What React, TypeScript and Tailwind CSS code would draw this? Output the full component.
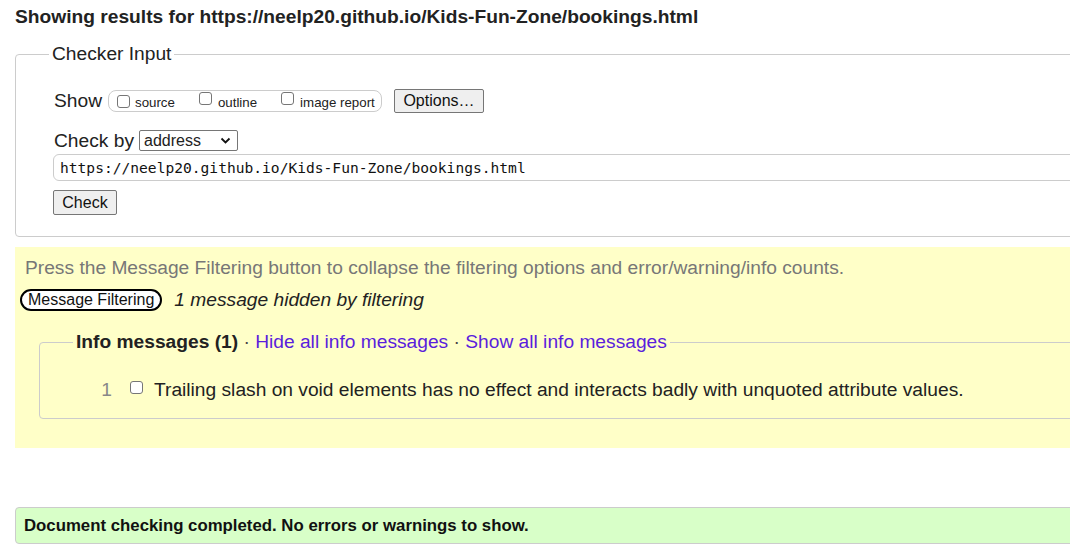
import React from "react";

const Checkbox: React.FC = () => (
  <span className="inline-block w-[13px] h-[13px] border border-[#767676] rounded-[3px] bg-white shrink-0" />
);

const App: React.FC = () => {
  return (
    <div className="w-[1070px] h-[550px] overflow-hidden bg-white text-[#222] font-['Liberation_Sans',Arial,sans-serif]">
      <div className="w-[1100px] pl-[15px]">
        {/* Heading */}
        <h1 className="pt-[6px] text-[19.2px] leading-[22px] font-bold text-[#222]">
          Showing results for https://neelp20.github.io/Kids-Fun-Zone/bookings.html
        </h1>

        {/* Checker Input */}
        <fieldset className="mt-[15px] border border-[#ccc] rounded-[4px]">
          <legend className="ml-[33px] px-[3px] text-[19.2px] leading-[22px] text-[#222]">Checker Input</legend>

          <div className="pl-[38px] pb-[21px]">
            <div className="mt-[24px] flex items-center h-[24px]">
              <span className="text-[19.2px] leading-[22px] mr-[6px]">Show</span>
              <div className="flex items-center h-[22px] w-[274px] border border-[#ccc] rounded-[8px] pl-[8px] text-[13.3px]">
                <Checkbox />
                <span className="ml-[5px] mt-[4px]">source</span>
                <span className="ml-[24px]"><Checkbox /></span>
                <span className="ml-[6px] mt-[4px]">outline</span>
                <span className="ml-[24px]"><Checkbox /></span>
                <span className="ml-[6px] mt-[4px]">image report</span>
              </div>
              <button className="ml-[12px] h-[24px] w-[90px] border border-[#767676] bg-[#efefef] rounded-[2px] text-[16px] leading-[20px] text-[#111]">
                Options…
              </button>
            </div>

            <div className="mt-[17px] flex items-center h-[21px]">
              <span className="text-[19.2px] leading-[22px] mr-[5px]">Check by</span>
              <div className="flex items-center justify-between w-[99px] h-[21px] border border-[#767676] rounded-[2px] pl-[4px] pr-[6px] text-[16px] leading-[19px] bg-white">
                <span>address</span>
                <svg width="11" height="7" viewBox="0 0 11 7" fill="none">
                  <path d="M1.5 1.5L5.5 5.5L9.5 1.5" stroke="#111" strokeWidth="1.8" />
                </svg>
              </div>
            </div>

            <div className="mt-[3px] -ml-[1px] h-[27px] border border-[#ccc] rounded-[6px] flex items-center pl-[6px] font-['DejaVu_Sans_Mono',monospace] text-[14.6px] text-[#111]">
              https://neelp20.github.io/Kids-Fun-Zone/bookings.html
            </div>

            <button className="mt-[9px] -ml-[1px] h-[25px] w-[64px] border border-[#767676] bg-[#efefef] rounded-[2px] text-[16px] leading-[20px] text-[#111] block">
              Check
            </button>
          </div>
        </fieldset>

        {/* Filtering / messages */}
        <div className="mt-[10px] h-[201px] bg-[#ffffc8] pt-[10px]">
          <p className="pl-[10px] text-[19.2px] leading-[22px] text-[#777]">
            Press the Message Filtering button to collapse the filtering options and error/warning/info counts.
          </p>
          <div className="mt-[10px] flex items-center h-[22px] pl-[5px]">
            <button className="h-[22px] px-[6px] border-2 border-black rounded-full bg-white text-[16px] leading-[16px] text-[#111]">
              Message Filtering
            </button>
            <span className="ml-[12px] text-[19.2px] italic leading-[22px] text-[#222]">1 message hidden by filtering</span>
          </div>

          <fieldset className="mt-[20px] ml-[24px] border border-[#ccc] rounded-[4px] pb-[17px]">
            <legend className="ml-[33px] px-[3px] text-[19.2px] leading-[22px]">
              <span className="font-bold text-[#222]">Info messages (1)</span>
              <span className="text-[#444]"> · </span>
              <a className="text-[#5a1edc]">Hide all info messages</a>
              <span className="text-[#444]"> · </span>
              <a className="text-[#5a1edc]">Show all info messages</a>
            </legend>
            <div className="mt-[26px] flex items-center text-[19.2px] leading-[22px]">
              <span className="w-[72px] text-right text-[#888]">1</span>
              <span className="ml-[18px] -mt-[4px]"><Checkbox /></span>
              <span className="ml-[11px] text-[#222]">
                Trailing slash on void elements has no effect and interacts badly with unquoted attribute values.
              </span>
            </div>
          </fieldset>
        </div>

        {/* Success */}
        <div className="mt-[59px] h-[37px] border border-[#ccc] rounded-[4px] bg-[#d8ffc8] flex items-center pl-[8px] text-[16.8px] font-bold text-[#111]">
          Document checking completed. No errors or warnings to show.
        </div>
      </div>
    </div>
  );
};

export default App;
